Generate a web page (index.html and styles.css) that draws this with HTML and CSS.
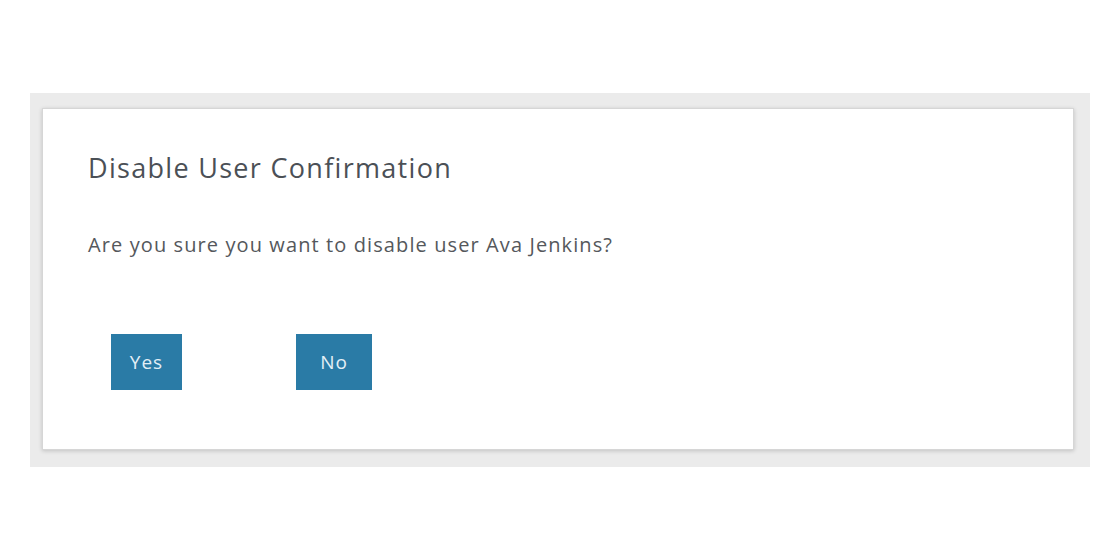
FILE: index.html
```html
<!DOCTYPE html>
<html>
<head>
<meta charset="utf-8">
<link rel="stylesheet" href="styles.css">
</head>
<body>
<div class="backdrop">
  <div class="dialog">
    <h2 class="title">Disable User Confirmation</h2>
    <p class="message">Are you sure you want to disable user Ava Jenkins?</p>
    <div class="actions">
      <button class="btn btn-yes">Yes</button>
      <button class="btn btn-no">No</button>
    </div>
  </div>
</div>
</body>
</html>
```
FILE: styles.css
```css
html, body {
  margin: 0;
  padding: 0;
  background: #ffffff;
}
body {
  font-family: "Open Sans", "Noto Sans", sans-serif;
}
.backdrop {
  margin: 93px 0 0 30px;
  width: 1060px;
  height: 374px;
  box-sizing: border-box;
  background: #ebebeb;
  padding: 15px 16px 17px 12px;
}
.dialog {
  height: 100%;
  box-sizing: border-box;
  background: #ffffff;
  border: 1px solid #d6d6d6;
  box-shadow: 0 1px 4px rgba(0,0,0,0.18);
  padding: 43px 45px 0 45px;
  display: flex;
  flex-direction: column;
}
.title {
  margin: 0;
  font-weight: 400;
  font-size: 27px;
  line-height: 32px;
  color: #4b5056;
  letter-spacing: 1.3px;
}
.message {
  margin: 49px 0 0 0;
  font-size: 20px;
  line-height: 24px;
  color: #55585c;
  letter-spacing: 1.1px;
}
.actions {
  margin: 77px 0 0 23px;
  display: flex;
  gap: 114px;
}
.btn {
  height: 56px;
  border: none;
  background: #2a7ba6;
  color: #e3eff6;
  font-family: inherit;
  font-size: 19px;
  letter-spacing: 1px;
  padding: 0;
}
.btn-yes { width: 71px; }
.btn-no { width: 76px; }
```
